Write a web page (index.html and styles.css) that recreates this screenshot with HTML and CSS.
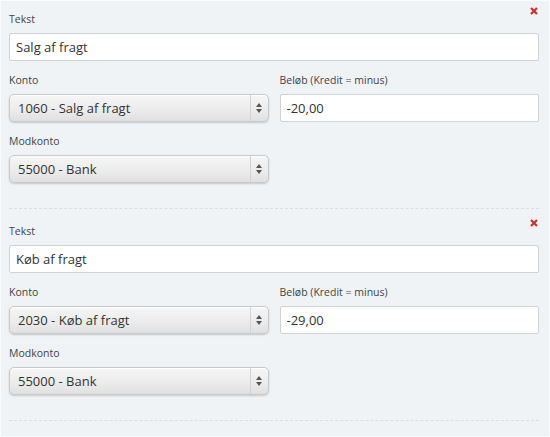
FILE: index.html
```html
<!DOCTYPE html>
<html lang="da">
<head>
    <meta charset="UTF-8">
    <meta name="viewport" content="width=device-width, initial-scale=1.0">
    <title>Posteringer</title>
    <link rel="stylesheet" href="styles.css">
</head>
<body>
    <div class="entries">
        <div class="entry">
            <a class="remove" href="#" title="Fjern">
                <svg width="8" height="8" viewBox="0 0 8 8"><path d="M1 1L7 7M7 1L1 7" /></svg>
            </a>
            <div class="field">
                <label>Tekst</label>
                <input type="text" value="Salg af fragt">
            </div>
            <div class="row">
                <div class="field">
                    <label>Konto</label>
                    <div class="select-wrap">
                        <select><option>1060 - Salg af fragt</option></select>
                        <span class="arrows"><svg width="6" height="10" viewBox="0 0 6 10"><path d="M3 0L6 4H0Z M3 10L0 6H6Z" /></svg></span>
                    </div>
                </div>
                <div class="field">
                    <label>Beløb (Kredit = minus)</label>
                    <input type="text" value="-20,00">
                </div>
            </div>
            <div class="row">
                <div class="field">
                    <label>Modkonto</label>
                    <div class="select-wrap">
                        <select><option>55000 - Bank</option></select>
                        <span class="arrows"><svg width="6" height="10" viewBox="0 0 6 10"><path d="M3 0L6 4H0Z M3 10L0 6H6Z" /></svg></span>
                    </div>
                </div>
            </div>
        </div>

        <div class="entry">
            <a class="remove" href="#" title="Fjern">
                <svg width="8" height="8" viewBox="0 0 8 8"><path d="M1 1L7 7M7 1L1 7" /></svg>
            </a>
            <div class="field">
                <label>Tekst</label>
                <input type="text" value="Køb af fragt">
            </div>
            <div class="row">
                <div class="field">
                    <label>Konto</label>
                    <div class="select-wrap">
                        <select><option>2030 - Køb af fragt</option></select>
                        <span class="arrows"><svg width="6" height="10" viewBox="0 0 6 10"><path d="M3 0L6 4H0Z M3 10L0 6H6Z" /></svg></span>
                    </div>
                </div>
                <div class="field">
                    <label>Beløb (Kredit = minus)</label>
                    <input type="text" value="-29,00">
                </div>
            </div>
            <div class="row">
                <div class="field">
                    <label>Modkonto</label>
                    <div class="select-wrap">
                        <select><option>55000 - Bank</option></select>
                        <span class="arrows"><svg width="6" height="10" viewBox="0 0 6 10"><path d="M3 0L6 4H0Z M3 10L0 6H6Z" /></svg></span>
                    </div>
                </div>
            </div>
        </div>
    </div>
</body>
</html>
```

FILE: styles.css
```css
body {
    margin: 0;
    font-family: "Open Sans", Arial, sans-serif;
    color: #333;
}

.entries {
    height: 435px;
    border: 1px solid #fbfcfd;
    background-color: #eff3f6;
    padding: 0 10px 0 8px;
}

.entry {
    position: relative;
    padding: 14px 0 25px 0;
    border-bottom: 1px dashed #d9dee3;
}

.entry:first-child {
    padding-top: 10px;
}

.remove {
    position: absolute;
    top: 10px;
    right: 1px;
    line-height: 0;
}

.entry:first-child .remove {
    top: 6px;
}

.remove svg path {
    stroke: #c9302c;
    stroke-width: 2.2;
}

.row {
    display: grid;
    grid-template-columns: 1fr 1fr;
    gap: 11px;
}

.field {
    margin-bottom: 11px;
}

.entry > .row:last-child .field {
    margin-bottom: 0;
}

.field label {
    display: block;
    font-size: 10.5px;
    line-height: 16px;
    color: #444;
    margin-bottom: 6px;
}

.field input {
    box-sizing: border-box;
    width: 100%;
    height: 28px;
    padding: 0 6px;
    border: 1px solid #cfd3d6;
    border-radius: 2px;
    background: #fff;
    font-family: inherit;
    font-size: 13px;
    color: #333;
}

.select-wrap {
    position: relative;
}

.select-wrap select {
    appearance: none;
    -webkit-appearance: none;
    box-sizing: border-box;
    width: 100%;
    height: 28px;
    padding: 0 24px 0 8px;
    border: 1px solid #c9c9c9;
    border-radius: 5px;
    background: linear-gradient(#f6f6f6, #ebebeb 60%, #e0e0e0);
    box-shadow: 0 1px 2px rgba(0, 0, 0, 0.18), inset 0 1px 0 #fff;
    font-family: inherit;
    font-size: 13px;
    color: #333;
}

.arrows {
    position: absolute;
    top: 1px;
    right: 1px;
    bottom: 1px;
    width: 17px;
    border-left: 1px solid #d2d2d2;
    display: flex;
    align-items: center;
    justify-content: center;
}

.arrows path {
    fill: #555;
}
```
